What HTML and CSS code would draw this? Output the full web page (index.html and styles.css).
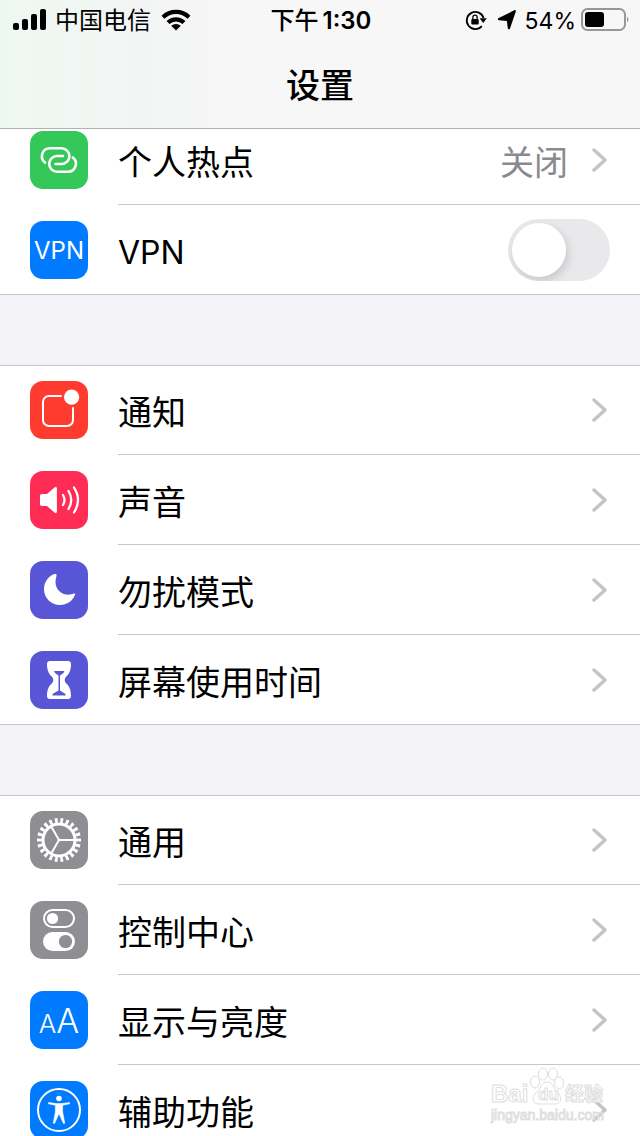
FILE: index.html
```html
<!DOCTYPE html>
<html lang="zh-CN">
    <head>
        <meta charset="UTF-8" />
        <meta name="viewport" content="width=device-width, initial-scale=1.0" />
        <title>设置</title>
        <link rel="stylesheet" href="styles.css">
    </head>
    <body>
        <header class="header">
            <div class="status">
                <div class="status-side">
                    <svg width="34" height="22" viewBox="0 0 34 22">
                        <rect x="0" y="14" width="6" height="7" rx="2" />
                        <rect x="9" y="10" width="6" height="11" rx="2" />
                        <rect x="18" y="5" width="6" height="16" rx="2" />
                        <rect x="27" y="0" width="6" height="21" rx="2" />
                    </svg>
                    <span class="carrier">中国电信</span>
                    <svg width="30" height="22" viewBox="0 0 30 22">
                        <path d="M2 8.2A18.5 18.5 0 0 1 28 8.2M7 13.6A11.5 11.5 0 0 1 23 13.6" fill="none" stroke="#000" stroke-width="4.2" />
                        <path d="M15 21.5 10.2 16.8a7 7 0 0 1 9.6 0z" />
                    </svg>
                </div>
                <div class="time"><span class="period">下午</span>1:30</div>
                <div class="status-side status-right">
                    <svg width="22" height="22" viewBox="0 0 22 22">
                        <path d="M16.8 17.2A8.6 8.6 0 1 1 18.6 9" fill="none" stroke="#000" stroke-width="1.8" />
                        <path d="M14.6 9.2h7.2l-3.6 4.8z" />
                        <rect x="6.3" y="10" width="7.4" height="5.6" rx="1" />
                        <path d="M7.9 10.4V8.3a2.1 2.1 0 0 1 4.2 0v2.1" fill="none" stroke="#000" stroke-width="1.3" />
                    </svg>
                    <svg class="arrow" width="20" height="20" viewBox="0 0 20 20">
                        <path d="M18.800 1.400 13 18.400c-.5 1.300-2 1.300-2.200-.1L9.900 11 2 10.200C.6 10 .5 8.600 1.700 8L17.200.3c1.200-.5 2 0 1.600 1.100z" />
                    </svg>
                    <span class="percent">54%</span>
                    <svg class="battery" width="48" height="24" viewBox="0 0 48 24">
                        <rect x="1" y="1" width="43" height="21" rx="5.5" fill="none" stroke="#979797" stroke-width="2" />
                        <rect x="4" y="4" width="19" height="15" rx="3" />
                        <path d="M46 8.5q3 3 0 6z" fill="#979797" />
                    </svg>
                </div>
            </div>
            <h1>设置</h1>
        </header>

        <main class="list">
            <ul class="group">
                <li>
                    <a class="row" href="#hotspot">
                        <svg class="icon green" viewBox="0 0 58 58">
                            <path class="line" stroke-width="2.6" d="M15 31.600A8 8 0 0 1 20 17.300H31.500A7.800 7.800 0 0 1 31.500 33H25.500M42.800 26.400A8 8 0 0 1 38 40.700H27A7.800 7.800 0 0 1 27 25H33" />
                        </svg>
                        <span class="label">个人热点</span>
                        <span class="value">关闭</span>
                        <svg class="chevron" viewBox="0 0 16 24"><path d="M2 2 13 12 2 22" /></svg>
                    </a>
                </li>
                <li>
                    <label class="row" for="vpn">
                        <span class="icon blue vpn" aria-hidden="true">VPN</span>
                        <span class="label latin">VPN</span>
                        <input class="switch" type="checkbox" id="vpn">
                    </label>
                </li>
            </ul>

            <ul class="group">
                <li>
                    <a class="row" href="#notifications">
                        <svg class="icon red" viewBox="0 0 58 58">
                            <path class="line" stroke-width="2" d="M31 15H19a6 6 0 0 0-6 6V39a6 6 0 0 0 6 6H37a6 6 0 0 0 6-6V27" />
                            <circle cx="41.6" cy="16.2" r="7.6" fill="#fff" />
                        </svg>
                        <span class="label">通知</span>
                        <svg class="chevron" viewBox="0 0 16 24"><path d="M2 2 13 12 2 22" /></svg>
                    </a>
                </li>
                <li>
                    <a class="row" href="#sounds">
                        <svg class="icon pink" viewBox="0 0 58 58">
                            <path fill="#fff" d="M12 23h5l7.500-6.400c1.200-1 2.400-.5 2.400 1v23c0 1.500-1.200 2-2.400 1L17 35h-5c-1.200 0-2-.8-2-2v-8c0-1.200.8-2 2-2z" />
                            <path class="line" stroke-width="2.300" d="M33 24q3 5 0 10M38.500 20q5.500 9 0 18M44 16.500q8 12.500 0 25" />
                        </svg>
                        <span class="label">声音</span>
                        <svg class="chevron" viewBox="0 0 16 24"><path d="M2 2 13 12 2 22" /></svg>
                    </a>
                </li>
                <li>
                    <a class="row" href="#dnd">
                        <svg class="icon purple" viewBox="0 0 58 58">
                            <path fill="#fff" d="M24.300 13.100C18 15.500 14 21.500 14 28.200 14 37 21.200 44 30 44c7 0 12.800-4 15-10.200.4-1.100-.2-1.600-1.200-1.200-1.800.8-3.600 1.100-5.600 1.100-7.200 0-12.700-5.600-12.700-12.700 0-2.300.5-4.500 1.100-6.500.3-1.200-.9-1.900-2.300-1.400z" />
                        </svg>
                        <span class="label">勿扰模式</span>
                        <svg class="chevron" viewBox="0 0 16 24"><path d="M2 2 13 12 2 22" /></svg>
                    </a>
                </li>
                <li>
                    <a class="row" href="#screen-time">
                        <svg class="icon purple" viewBox="0 0 58 58">
                            <path fill="#fff" d="M20 10H38c2 0 3 1 3 3 0 6-1.500 9.500-4.500 12.300-2.400 2.200-2.400 5.200 0 7.400C39.500 35.500 41 39 41 45c0 2-1 3-3 3H20c-2 0-3-1-3-3 0-6 1.500-9.500 4.500-12.300 2.400-2.200 2.400-5.200 0-7.400C18.500 22.500 17 19 17 13c0-2 1-3 3-3z" />
                            <path fill="#5856d6" d="M24 20H34.500L33.500 22 30 24.500V39.500L35.500 43V44.500H22.500V43L28.500 39.500V24.500L25 22z" />
                        </svg>
                        <span class="label">屏幕使用时间</span>
                        <svg class="chevron" viewBox="0 0 16 24"><path d="M2 2 13 12 2 22" /></svg>
                    </a>
                </li>
            </ul>

            <ul class="group">
                <li>
                    <a class="row" href="#general">
                        <svg class="icon gray" viewBox="0 0 58 58">
                            <circle class="line" cx="29" cy="29" r="16" stroke-width="3" />
                            <circle class="teeth" cx="29" cy="29" r="19.500" pathLength="44" />
                            <path class="line" stroke-width="2" d="M29 29H44M29 29 21.500 16M29 29 21.500 42" />
                        </svg>
                        <span class="label">通用</span>
                        <svg class="chevron" viewBox="0 0 16 24"><path d="M2 2 13 12 2 22" /></svg>
                    </a>
                </li>
                <li>
                    <a class="row" href="#control-center">
                        <svg class="icon gray" viewBox="0 0 58 58">
                            <rect class="line" x="14" y="9" width="30" height="17" rx="8.500" stroke-width="2" />
                            <circle cx="22.500" cy="17.500" r="5.600" fill="#fff" />
                            <rect x="13" y="31" width="32" height="19" rx="9.500" fill="#fff" />
                            <circle cx="35.500" cy="40.500" r="6.600" fill="#8e8e93" />
                        </svg>
                        <span class="label">控制中心</span>
                        <svg class="chevron" viewBox="0 0 16 24"><path d="M2 2 13 12 2 22" /></svg>
                    </a>
                </li>
                <li>
                    <a class="row" href="#display">
                        <span class="icon blue display" aria-hidden="true"><span class="small-a">A</span>A</span>
                        <span class="label">显示与亮度</span>
                        <svg class="chevron" viewBox="0 0 16 24"><path d="M2 2 13 12 2 22" /></svg>
                    </a>
                </li>
                <li>
                    <a class="row" href="#accessibility">
                        <svg class="icon blue" viewBox="0 0 58 58">
                            <circle class="line" cx="29" cy="29" r="21" stroke-width="2" />
                            <circle cx="29" cy="17.500" r="2.800" fill="#fff" />
                            <path fill="#fff" stroke="#fff" stroke-width=".6" stroke-linejoin="round" d="M18.500 21.600 26 22.600H32L39.500 21.600V22.800L32.600 24.300V31L34.800 42.300H33.300L29.500 33.500H28.500L24.700 42.300H23.200L25.400 31V24.300L18.500 22.800z" />
                        </svg>
                        <span class="label">辅助功能</span>
                        <svg class="chevron" viewBox="0 0 16 24"><path d="M2 2 13 12 2 22" /></svg>
                    </a>
                </li>
            </ul>
        </main>

        <svg class="watermark" width="120" height="60" viewBox="0 0 120 60">
            <g class="paw">
                <ellipse cx="45" cy="16" rx="4.500" ry="6" />
                <ellipse cx="53" cy="8" rx="4.500" ry="6" />
                <ellipse cx="63" cy="8" rx="4.500" ry="6" />
                <ellipse cx="69" cy="17" rx="4.500" ry="6" />
                <path d="M57 16c-6 0-6 6-10 10-6 5-5 12 2 12 5 0 11 0 16 0 7 0 8-7 2-12-4-4-4-10-10-10z" />
            </g>
            <text class="mark-big" x="1" y="36">Bai</text>
            <text class="mark-du" x="48" y="34">du</text>
            <text class="mark-cn" x="75" y="35">经验</text>
            <text class="mark-url" x="1" y="54">jingyan.baidu.com</text>
        </svg>
    </body>
</html>
```
FILE: styles.css
```css
* {
    box-sizing: border-box;
}
body {
    margin: 0;
    height: 100vh;
    display: flex;
    flex-direction: column;
    position: relative;
    overflow: hidden;
    background-color: #f2f2f7;
    color: #000;
    font-family: Inter, "Noto Sans CJK SC", sans-serif;
}
.header {
    flex: none;
    background: linear-gradient(90deg, #eef8f2 0%, #f3f5f4 22%, #f7f7f7 45%);
    border-bottom: 1px solid #b2b2b4;
}
.status {
    display: grid;
    grid-template-columns: 1fr auto 1fr;
    align-items: center;
    height: 40px;
    padding: 0 11px 0 13px;
}
.status-side {
    display: flex;
    align-items: center;
}
.status-right {
    justify-content: flex-end;
}
.carrier {
    margin: 0 10px 0 8px;
    padding-top: 2px;
    font-size: 24px;
    line-height: 38px;
}
.time {
    padding-top: 2px;
    font-size: 24px;
    line-height: 38px;
    font-weight: 600;
}
.period {
    margin-right: 4px;
    font-weight: 500;
}
.arrow {
    margin: 0 8px 0 10px;
}
.percent {
    margin-right: 5px;
    padding-top: 2px;
    font-size: 23px;
}
h1 {
    margin: 0;
    height: 88px;
    line-height: 92px;
    text-align: center;
    font-size: 34px;
    font-weight: 500;
}

.list {
    flex: 1;
    min-height: 0;
    overflow-y: auto;
    scrollbar-width: none;
}
.group {
    list-style: none;
    margin: 0 0 70px;
    padding: 0;
    background-color: #fff;
    box-shadow: inset 0 1px #c6c6c8, inset 0 -1px #c6c6c8;
}
/* the list is scrolled a little under the header */
.group:first-child {
    margin-top: -14px;
}
.row {
    display: flex;
    align-items: center;
    position: relative;
    height: 90px;
    padding: 0 30px;
    color: #000;
    text-decoration: none;
}
li:not(:last-child) .row::after {
    content: "";
    position: absolute;
    left: 118px;
    right: 0;
    bottom: 0;
    height: 1px;
    background-color: #c6c6c8;
}
.label,
.value {
    padding-top: 5px;
    font-size: 34px;
    line-height: 48px;
}
.label {
    flex: 1;
    margin-left: 30px;
}
.latin {
    font-size: 32px;
}
.value {
    margin-right: 24px;
    color: #8a8a8e;
}
.chevron {
    width: 16px;
    height: 24px;
    margin-right: 2px;
    fill: none;
    stroke: #c4c4c6;
    stroke-width: 3.4;
    stroke-linecap: round;
    stroke-linejoin: round;
}

.icon {
    flex: none;
    width: 58px;
    height: 58px;
    border-radius: 13px;
}
.green { background-color: #34c759; }
.blue { background-color: #007aff; }
.red { background-color: #ff3b30; }
.pink { background-color: #ff2d55; }
.purple { background-color: #5856d6; }
.gray { background-color: #8e8e93; }
.line {
    fill: none;
    stroke: #fff;
    stroke-linecap: round;
}
.teeth {
    fill: none;
    stroke: #fff;
    stroke-width: 5;
    stroke-dasharray: 1 1;
    stroke-dashoffset: 0.5;
}
.vpn,
.display {
    color: #fff;
    text-align: center;
    line-height: 60px;
}
.vpn {
    font-size: 24px;
}
.display {
    font-size: 34px;
    font-weight: 300;
}
.small-a {
    font-size: 26px;
}

.switch {
    appearance: none;
    width: 102px;
    height: 62px;
    margin: 0;
    padding: 4px;
    border-radius: 31px;
    background-color: #e9e9eb;
    overflow: hidden;
}
.switch::before {
    content: "";
    display: block;
    width: 54px;
    height: 54px;
    border-radius: 50%;
    background-color: #fff;
    box-shadow: 2px 4px 10px rgba(0, 0, 0, 0.15);
}
.switch:checked {
    background-color: #34c759;
}
.switch:checked::before {
    margin-left: 40px;
}

.watermark {
    position: absolute;
    right: 30px;
    bottom: 10px;
    pointer-events: none;
    fill: #fff;
    stroke: #dedede;
    stroke-width: 1;
    font-family: "Liberation Sans", "Noto Sans CJK SC", sans-serif;
}
.mark-big {
    font-size: 24px;
    font-weight: bold;
}
.mark-du {
    font-size: 17px;
    font-weight: bold;
}
.mark-cn {
    font-size: 19px;
    font-weight: bold;
}
.mark-url {
    font-size: 14px;
}
```
